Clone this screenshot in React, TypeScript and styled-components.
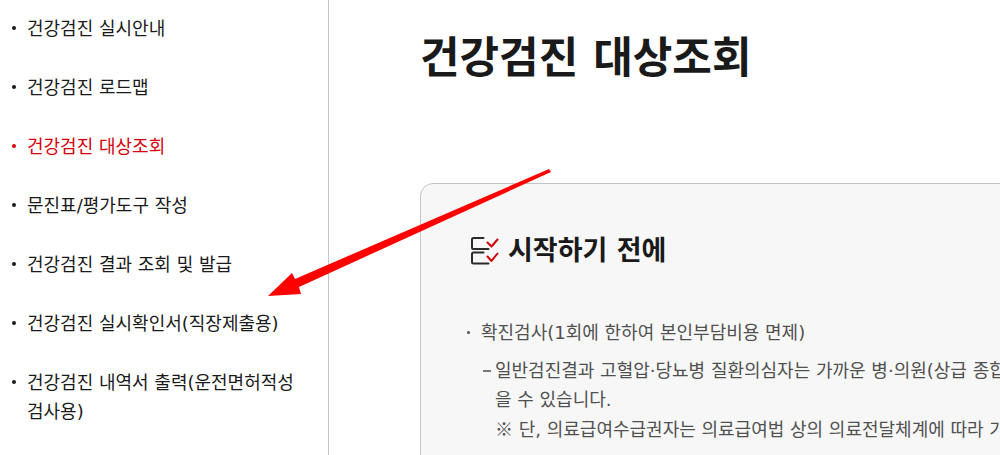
import React from 'react';
import styled, { createGlobalStyle } from 'styled-components';

const GlobalStyle = createGlobalStyle`
  * { box-sizing: border-box; }
  body {
    margin: 0;
    background: #fff;
    color: #1a1a1a;
    font-family: "DejaVu Sans", "Noto Sans CJK KR", sans-serif;
    font-size: 18px;
    line-height: 29px;
  }
  ul { list-style: none; margin: 0; padding: 0; }
`;

const Page = styled.div`
  position: relative;
  display: flex;
  height: 100vh;
  overflow: hidden;
`;

const SideNav = styled.nav`
  flex: 0 0 329px;
  padding: 14px 24px 14px 12px;
  border-right: 1px solid #c4c4c4;
`;

const NavList = styled.ul`
  display: flex;
  flex-direction: column;
  gap: 30px;
`;

const NavLink = styled.a<{ $active?: boolean }>`
  display: flex;
  gap: 11px;
  color: ${({ $active }) => ($active ? '#d6000c' : '#1a1a1a')};
  text-decoration: none;
  word-break: break-all;
`;

const Bullet = styled.span`
  flex: none;
  width: 4px;
  height: 4px;
  margin-top: 12px;
  border-radius: 50%;
  background: currentColor;
`;

const Content = styled.main`
  flex: 1;
  min-width: 0;
  padding: 26px 0 0 91px;
  overflow: hidden;
`;

const Title = styled.h1`
  margin: 0 0 93px;
  font-size: 43px;
  line-height: 64px;
  font-weight: 700;
`;

const Panel = styled.section`
  min-width: 1060px;
  padding: 46px 46px 48px;
  border: 1px solid #c4c4c4;
  border-radius: 13px;
  background: #f7f7f7;
`;

const PanelTitle = styled.h2`
  display: flex;
  align-items: center;
  gap: 9px;
  margin: 0 0 46px;
  padding-left: 4px;
  font-size: 27px;
  line-height: 42px;
  font-weight: 700;
`;

const InfoItem = styled.li`
  display: flex;
  gap: 11px;
  color: #505050;
`;

const InfoBullet = styled(Bullet)`
  width: 3px;
  height: 3px;
  margin-top: 13px;
`;

const SubList = styled.ul`
  && { padding-top: 9px; }
`;

const SubItem = styled.li`
  display: flex;
  gap: 4px;
  padding-left: 2px;
`;

const Dash = styled.span`
  flex: none;
  width: 8px;
  height: 2px;
  margin-top: 14px;
  background: #777;
`;

const Text = styled.p`
  margin: 0;
  white-space: nowrap;
`;

const ReferenceMark = styled.span`
  font-family: "Noto Sans CJK KR", sans-serif;
`;

const Arrow = styled.svg`
  position: absolute;
  top: 0;
  left: 0;
  pointer-events: none;
`;

const links = [
  '건강검진 실시안내',
  '건강검진 로드맵',
  '건강검진 대상조회',
  '문진표/평가도구 작성',
  '건강검진 결과 조회 및 발급',
  '건강검진 실시확인서(직장제출용)',
  '건강검진 내역서 출력(운전면허적성검사용)',
];

const ChecklistIcon = () => (
  <svg width="28" height="28" viewBox="0 0 28 28" fill="none" strokeWidth="2" strokeLinecap="round" strokeLinejoin="round" aria-hidden="true">
    <path d="M12.500 1H2.500Q1 1 1 2.500V10.500Q1 12 2.500 12H17.500" stroke="#2b2b2b" />
    <path d="M12.500 15.500H2.500Q1 15.500 1 17V25Q1 26.500 2.500 26.500H17.500" stroke="#2b2b2b" />
    <path d="M16.500 5.500L20.500 9.500L26.500 2.500M16.500 19.500L20.500 24L26.500 16.500" stroke="#d6000c" />
  </svg>
);

export default function App() {
  return (
    <>
      <GlobalStyle />
      <Page>
        <SideNav>
          <NavList>
            {links.map((label) => {
              const active = label === '건강검진 대상조회';
              return (
                <li key={label}>
                  <NavLink href="#" $active={active} aria-current={active ? 'page' : undefined}>
                    <Bullet />
                    <span>{label}</span>
                  </NavLink>
                </li>
              );
            })}
          </NavList>
        </SideNav>
        <Content>
          <Title>건강검진 대상조회</Title>
          <Panel>
            <PanelTitle>
              <ChecklistIcon />
              시작하기 전에
            </PanelTitle>
            <ul>
              <InfoItem>
                <InfoBullet />
                <div>
                  <Text>확진검사(1회에 한하여 본인부담비용 면제)</Text>
                  <SubList>
                    <SubItem>
                      <Dash />
                      <div>
                        <Text>일반검진결과 고혈압·당뇨병 질환의심자는 가까운 병·의원(상급 종합</Text>
                        <Text>을 수 있습니다.</Text>
                        <Text>
                          <ReferenceMark>※</ReferenceMark> 단, 의료급여수급권자는 의료급여법 상의 의료전달체계에 따라 가
                        </Text>
                      </div>
                    </SubItem>
                  </SubList>
                </div>
              </InfoItem>
            </ul>
          </Panel>
        </Content>
        <Arrow width="560" height="300" viewBox="0 0 560 300" aria-hidden="true">
          <path d="M549 169L551 172L299 287L301 294L268 296L292 273L295 279Z" fill="#f00" />
        </Arrow>
      </Page>
    </>
  );
}
